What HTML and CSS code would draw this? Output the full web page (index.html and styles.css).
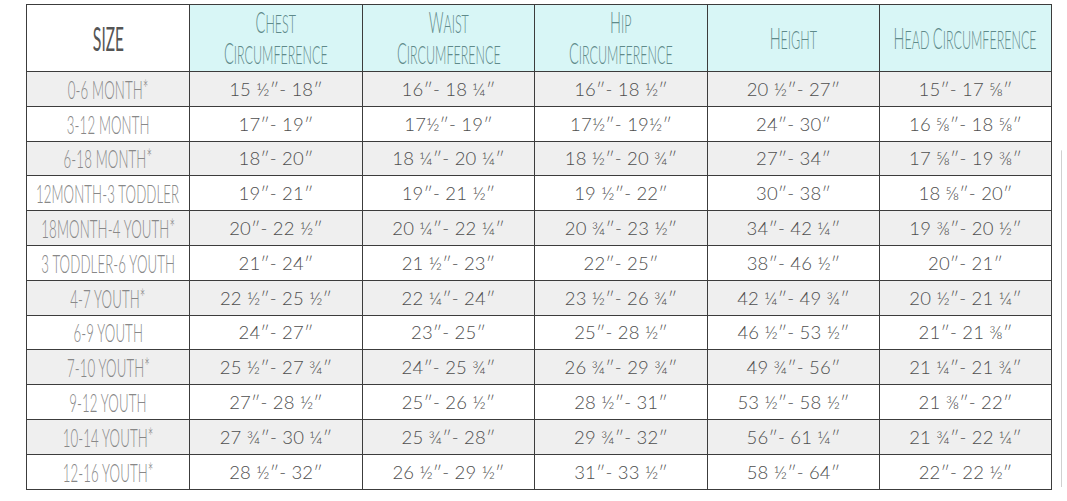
FILE: index.html
```html
<!DOCTYPE html>
<html>
<head>
<meta charset="utf-8">
<link rel="stylesheet" href="styles.css">
</head>
<body>
<div class="page">
<table class="chart">
  <colgroup>
    <col class="c0"><col class="c1"><col class="c2"><col class="c3"><col class="c4"><col class="c5">
  </colgroup>
  <thead>
    <tr>
      <th class="size-head"><span class="hand big"><b>S</b>ize</span></th>
      <th><span class="hand"><b>C</b>hest<br><b>C</b>ircumference</span></th>
      <th><span class="hand"><b>W</b>aist<br><b>C</b>ircumference</span></th>
      <th><span class="hand"><b>H</b>ip<br><b>C</b>ircumference</span></th>
      <th><span class="hand"><b>H</b>eight</span></th>
      <th><span class="hand"><b>H</b>ead <b>C</b>ircumference</span></th>
    </tr>
  </thead>
  <tbody>
    <tr class="alt"><td class="sz"><span class="hand">0-6 month*</span></td><td>15 ½″- 18″</td><td>16″- 18 ¼″</td><td>16″- 18 ½″</td><td>20 ½″- 27″</td><td>15″- 17 ⅝″</td></tr>
    <tr><td class="sz"><span class="hand">3-12 month</span></td><td>17″- 19″</td><td>17½″- 19″</td><td>17½″- 19½″</td><td>24″- 30″</td><td>16 ⅝″- 18 ⅝″</td></tr>
    <tr class="alt"><td class="sz"><span class="hand">6-18 month*</span></td><td>18″- 20″</td><td>18 ¼″- 20 ¼″</td><td>18 ½″- 20 ¾″</td><td>27″- 34″</td><td>17 ⅝″- 19 ⅜″</td></tr>
    <tr><td class="sz"><span class="hand">12month-3 Toddler</span></td><td>19″- 21″</td><td>19″- 21 ½″</td><td>19 ½″- 22″</td><td>30″- 38″</td><td>18 ⅝″- 20″</td></tr>
    <tr class="alt"><td class="sz"><span class="hand">18month-4 youth*</span></td><td>20″- 22 ½″</td><td>20 ¼″- 22 ¼″</td><td>20 ¾″- 23 ½″</td><td>34″- 42 ¼″</td><td>19 ⅜″- 20 ½″</td></tr>
    <tr><td class="sz"><span class="hand">3 toddler-6 youth</span></td><td>21″- 24″</td><td>21 ½″- 23″</td><td>22″- 25″</td><td>38″- 46 ½″</td><td>20″- 21″</td></tr>
    <tr class="alt"><td class="sz"><span class="hand">4-7 youth*</span></td><td>22 ½″- 25 ½″</td><td>22 ¼″- 24″</td><td>23 ½″- 26 ¾″</td><td>42 ¼″- 49 ¾″</td><td>20 ½″- 21 ¼″</td></tr>
    <tr><td class="sz"><span class="hand">6-9 youth</span></td><td>24″- 27″</td><td>23″- 25″</td><td>25″- 28 ½″</td><td>46 ½″- 53 ½″</td><td>21″- 21 ⅜″</td></tr>
    <tr class="alt"><td class="sz"><span class="hand">7-10 youth*</span></td><td>25 ½″- 27 ¾″</td><td>24″- 25 ¾″</td><td>26 ¾″- 29 ¾″</td><td>49 ¾″- 56″</td><td>21 ¼″- 21 ¾″</td></tr>
    <tr><td class="sz"><span class="hand">9-12 youth</span></td><td>27″- 28 ½″</td><td>25″- 26 ½″</td><td>28 ½″- 31″</td><td>53 ½″- 58 ½″</td><td>21 ⅜″- 22″</td></tr>
    <tr class="alt"><td class="sz"><span class="hand">10-14 youth*</span></td><td>27 ¾″- 30 ¼″</td><td>25 ¾″- 28″</td><td>29 ¾″- 32″</td><td>56″- 61 ¼″</td><td>21 ¾″- 22 ¼″</td></tr>
    <tr><td class="sz"><span class="hand">12-16 youth*</span></td><td>28 ½″- 32″</td><td>26 ½″- 29 ½″</td><td>31″- 33 ½″</td><td>58 ½″- 64″</td><td>22″- 22 ½″</td></tr>
  </tbody>
</table>
<div class="edge"></div>
</div>
</body>
</html>
```

FILE: styles.css
```css
html, body {
  margin: 0;
  padding: 0;
  background: #ffffff;
}

.page {
  width: 1067px;
  height: 501px;
  box-sizing: border-box;
  padding: 4px 0 0 26px;
  display: flex;
  align-items: flex-start;
  gap: 9px;
}

.chart {
  border-collapse: collapse;
  table-layout: fixed;
  width: 1026px;
  font-family: Lato, "Noto Sans", sans-serif;
  color: #4e4e4e;
}

.c0 { width: 163px; }
.c1 { width: 173px; }
.c2 { width: 172px; }
.c3 { width: 173px; }
.c4 { width: 172px; }
.c5 { width: 172px; }

.chart th,
.chart td {
  border: 1.5px solid #3c3c3c;
  text-align: center;
  vertical-align: middle;
  padding: 0;
  white-space: nowrap;
}

.chart th {
  height: 66px;
  background: #d8f6f6;
  font-weight: normal;
}

.chart th.size-head {
  background: #ffffff;
}

.chart td {
  height: 33.8px;
  font-size: 18.5px;
  font-weight: 300;
  letter-spacing: 0.2px;
}

.chart tr.alt td {
  background: #efefef;
}

.hand {
  display: inline-block;
  font-family: Lato, sans-serif;
  font-weight: 300;
  text-transform: uppercase;
  font-size: 25px;
  line-height: 30px;
  color: #5f8a8a;
  transform: scaleX(0.5);
  transform-origin: center;
  margin: 0 -80px;
}

.hand b {
  font-weight: 300;
  font-size: 29px;
}

.hand.big {
  font-size: 32px;
  color: #555555;
  font-weight: 400;
  transform: scaleX(0.48);
}

.hand.big b {
  font-weight: 400;
  font-size: 33px;
}

.sz .hand {
  color: #888888;
  font-size: 26px;
  line-height: 28px;
  transform: scaleX(0.51);
}

.edge {
  width: 0;
  height: 336px;
  margin-top: 146px;
  border-left: 1.5px solid #d0d0d0;
  border-top: 1.5px solid #e4e4e4;
  border-top-left-radius: 6px;
}
```
